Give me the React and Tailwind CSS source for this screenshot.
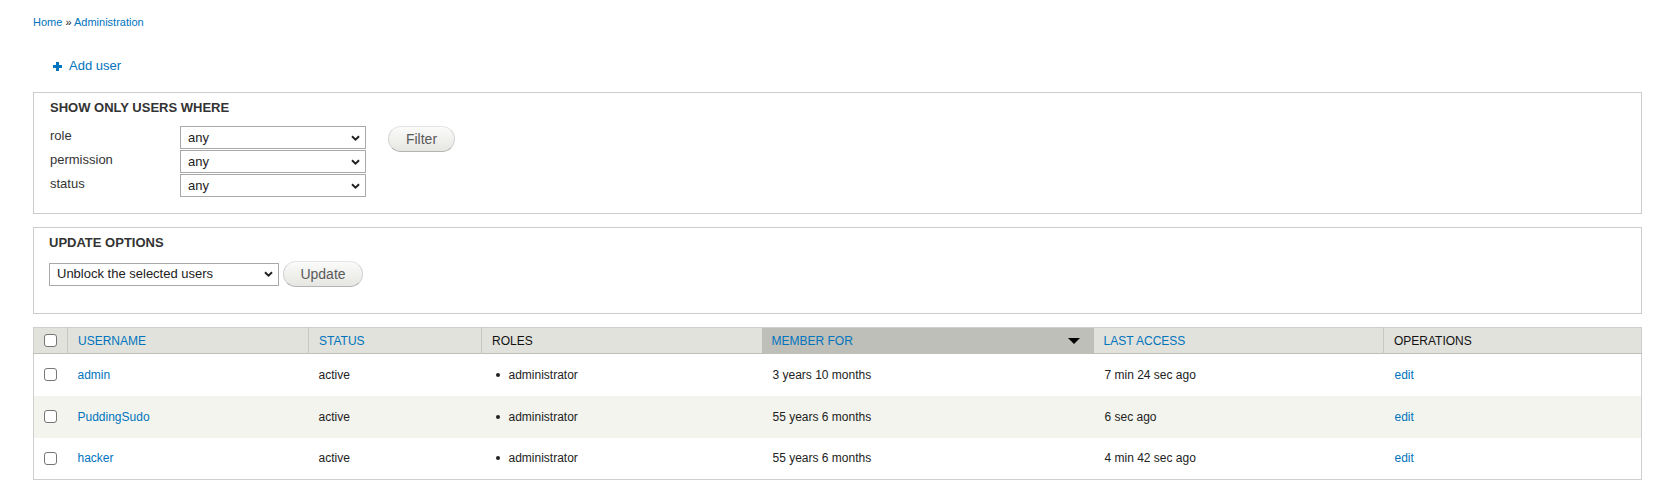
import React from "react";

const USERS = [
  { name: "admin", status: "active", role: "administrator", member: "3 years 10 months", access: "7 min 24 sec ago" },
  { name: "PuddingSudo", status: "active", role: "administrator", member: "55 years 6 months", access: "6 sec ago" },
  { name: "hacker", status: "active", role: "administrator", member: "55 years 6 months", access: "4 min 42 sec ago" },
];

function Chevron() {
  return (
    <svg width="9" height="6" viewBox="0 0 9 6" className="shrink-0">
      <polyline points="1,1.2 4.5,4.6 8,1.2" fill="none" stroke="#222" strokeWidth="2" />
    </svg>
  );
}

// fake select box, square corners like the screenshot
function SelectBox({ value, width }) {
  return (
    <div
      className="flex items-center justify-between border border-[#a9a9a9] bg-white pl-[7px] pr-[5px] text-[13px] text-[#222] h-[23px]"
      style={{ width }}
    >
      <span>{value}</span>
      <Chevron />
    </div>
  );
}

function PillButton({ children, className = "" }) {
  return (
    <button
      className={
        "rounded-full border border-[#d2d2d2] border-t-[#e4e4e4] border-b-[#b4b4b4] bg-linear-to-b from-[#fbfbfa] to-[#e6e6e2] text-[14px] text-[#5a5a5a] h-[26px] flex items-center justify-center " +
        className
      }
    >
      {children}
    </button>
  );
}

function Checkbox() {
  return <span className="block w-[13px] h-[13px] rounded-[3px] border border-[#767676] bg-white" />;
}

export default function App() {
  return (
    <div className="min-h-[488px] bg-white pl-[33px] pr-[27px] pt-[16px] font-['Liberation_Sans',Arial,sans-serif] text-[#333]">
      {/* breadcrumb */}
      <div className="text-[11px] leading-[13px]">
        <a className="text-[#0074bd]">Home</a>
        <span className="text-[#222]"> » </span>
        <a className="text-[#0074bd]">Administration</a>
      </div>

      {/* action link */}
      <div className="mt-[29px] pl-[20px] flex items-center gap-[7px] text-[13px] leading-[16px] text-[#0074bd]">
        <svg width="9" height="9" viewBox="0 0 9 9">
          <rect x="3" y="0" width="3" height="9" fill="#0074bd" />
          <rect x="0" y="3" width="9" height="3" fill="#0074bd" />
        </svg>
        <span>Add user</span>
      </div>

      {/* filter fieldset */}
      <div className="mt-[18px] border border-[#ccc] pl-[16px] pt-[7px] pb-[16px]">
        <div className="text-[13px] leading-[16px] font-bold uppercase text-[#333]">Show only users where</div>
        <div className="mt-[10px] flex items-start gap-[22px]">
          <div className="flex flex-col gap-[1px]">
            {["role", "permission", "status"].map((l) => (
              <div key={l} className="flex items-start">
                <div className="w-[130px] pt-[2px] text-[13px] leading-[16px]">{l}</div>
                <SelectBox value="any" width={186} />
              </div>
            ))}
          </div>
          <PillButton className="w-[67px]">Filter</PillButton>
        </div>
      </div>

      {/* update fieldset */}
      <div className="mt-[13px] border border-[#ccc] pl-[15px] pt-[7px] pb-[26px]">
        <div className="text-[13px] leading-[16px] font-bold uppercase text-[#333]">Update options</div>
        <div className="mt-[10px] flex items-center gap-[4px]">
          <SelectBox value="Unblock the selected users" width={230} />
          <PillButton className="w-[80px]">Update</PillButton>
        </div>
      </div>

      {/* users table */}
      <table className="mt-[13px] w-full table-fixed border-collapse border border-[#cfcfcf] text-[12px] text-[#222]">
        <colgroup>
          <col className="w-[34px]" />
          <col className="w-[241px]" />
          <col className="w-[173px]" />
          <col className="w-[280px]" />
          <col className="w-[332px]" />
          <col className="w-[290px]" />
          <col />
        </colgroup>
        <thead>
          <tr className="h-[26px] bg-[#e1e2dc] border-b border-[#bebfb9] uppercase text-left">
            <th className="pl-[10px] font-normal border-r border-[#c8c9c3]">
              <Checkbox />
            </th>
            <th className="pl-[10px] font-normal text-[#0074bd] border-r border-[#c8c9c3]">Username</th>
            <th className="pl-[10px] font-normal text-[#0074bd] border-r border-[#c8c9c3]">Status</th>
            <th className="pl-[10px] font-normal text-[#111]">Roles</th>
            <th className="pl-[10px] pr-[14px] font-normal text-[#0074bd] bg-[#bebfb9]">
              <div className="flex items-center justify-between">
                <span>Member for</span>
                <svg width="12" height="6" viewBox="0 0 12 6">
                  <polygon points="0,0 12,0 6,6" fill="#000" />
                </svg>
              </div>
            </th>
            <th className="pl-[10px] font-normal text-[#0074bd] border-r border-[#c8c9c3]">Last access</th>
            <th className="pl-[10px] font-normal text-[#111]">Operations</th>
          </tr>
        </thead>
        <tbody>
          {USERS.map((u, i) => (
            <tr key={u.name} className={"h-[42px] " + (i % 2 === 1 ? "bg-[#f3f4ee]" : "bg-white")}>
              <td className="pl-[10px]">
                <Checkbox />
              </td>
              <td className="pl-[10px] text-[#0074bd]">{u.name}</td>
              <td className="pl-[10px]">{u.status}</td>
              <td className="pl-[14px]">
                <div className="flex items-center gap-[9px]">
                  <span className="block w-[4px] h-[4px] rounded-full bg-[#222]" />
                  <span>{u.role}</span>
                </div>
              </td>
              <td className="pl-[11px]">{u.member}</td>
              <td className="pl-[11px]">{u.access}</td>
              <td className="pl-[11px] text-[#0074bd]">edit</td>
            </tr>
          ))}
        </tbody>
      </table>
    </div>
  );
}
